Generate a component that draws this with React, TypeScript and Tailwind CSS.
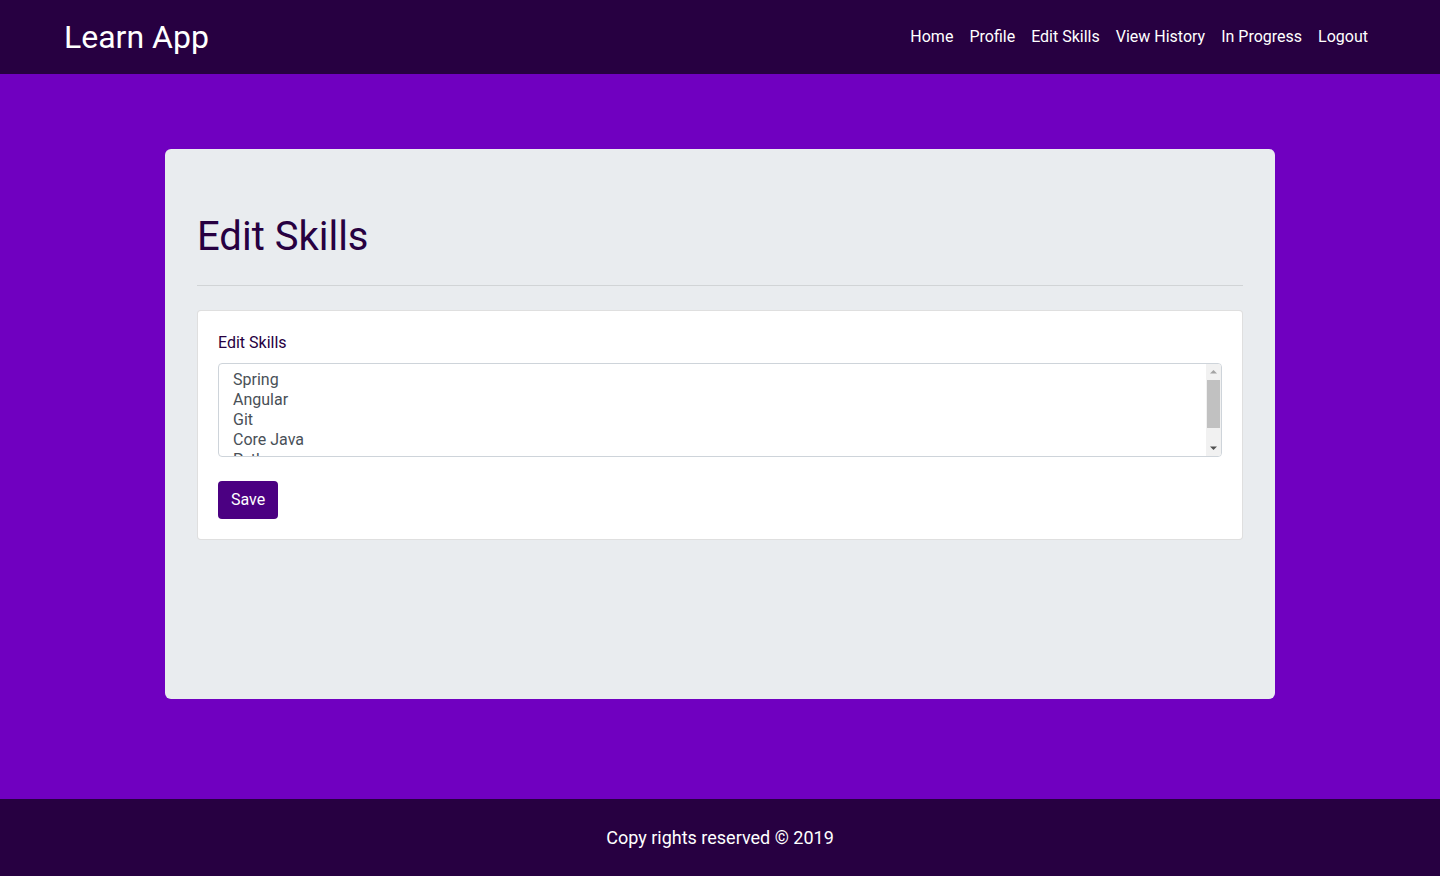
import React from "react";

export default function App() {
  const skills = ["Spring", "Angular", "Git", "Core Java", "Python", "HTML", "CSS", "JavaScript"];
  return (
    <div className="min-h-screen flex flex-col bg-[#7000c0]" style={{ fontFamily: "Roboto, 'Noto Sans', sans-serif" }}>
      <nav className="h-[74px] bg-[#270041] flex items-center justify-between px-16">
        <a className="text-white text-[32px] leading-none">Learn App</a>
        <ul className="flex items-center">
          {["Home", "Profile", "Edit Skills", "View History", "In Progress", "Logout"].map((l) => (
            <li key={l}>
              <a className="block px-2 text-white text-base leading-6">{l}</a>
            </li>
          ))}
        </ul>
      </nav>
      <main className="flex-1 pt-[75px] pb-[100px]">
        <div className="mx-auto w-[1110px] h-[550px] bg-[#e9ecef] rounded-md px-8 pt-16">
          <h1 className="text-[40px] leading-[48px] text-[#270041]">Edit Skills</h1>
          <hr className="border-0 border-t border-[rgba(0,0,0,0.1)] mt-6 mb-6" />
          <div className="bg-white border border-[rgba(0,0,0,0.125)] rounded p-5">
            <label className="block text-base leading-6 text-[#270041] mb-2">Edit Skills</label>
            <div className="flex h-[94px] border border-[#ced4da] rounded bg-white overflow-hidden">
              <div className="flex-1 overflow-hidden pl-[14px] pt-[6px]">
                {skills.map((s) => (
                  <div key={s} className="h-5 leading-5 text-base text-[#495057]">{s}</div>
                ))}
              </div>
              <div className="w-[15px] bg-[#f1f1f1] flex flex-col items-center">
                <svg width="15" height="15" viewBox="0 0 15 15" className="shrink-0">
                  <path d="M4 9.5 L7.5 6 L11 9.5 Z" fill="#a3a3a3" />
                </svg>
                <div className="mt-[1px] w-[13px] h-[48px] bg-[#c1c1c1]" />
                <div className="flex-1" />
                <svg width="15" height="15" viewBox="0 0 15 15" className="shrink-0">
                  <path d="M4 5.5 L11 5.5 L7.5 9 Z" fill="#505050" />
                </svg>
              </div>
            </div>
            <button className="mt-6 h-[38px] w-[60px] flex items-center justify-center rounded bg-[#4b0082] text-white text-base leading-6">Save</button>
          </div>
        </div>
      </main>
      <footer className="h-[77px] bg-[#270041] flex items-center justify-center">
        <p className="text-white text-[18px] leading-6">Copy rights reserved © 2019</p>
      </footer>
    </div>
  );
}
